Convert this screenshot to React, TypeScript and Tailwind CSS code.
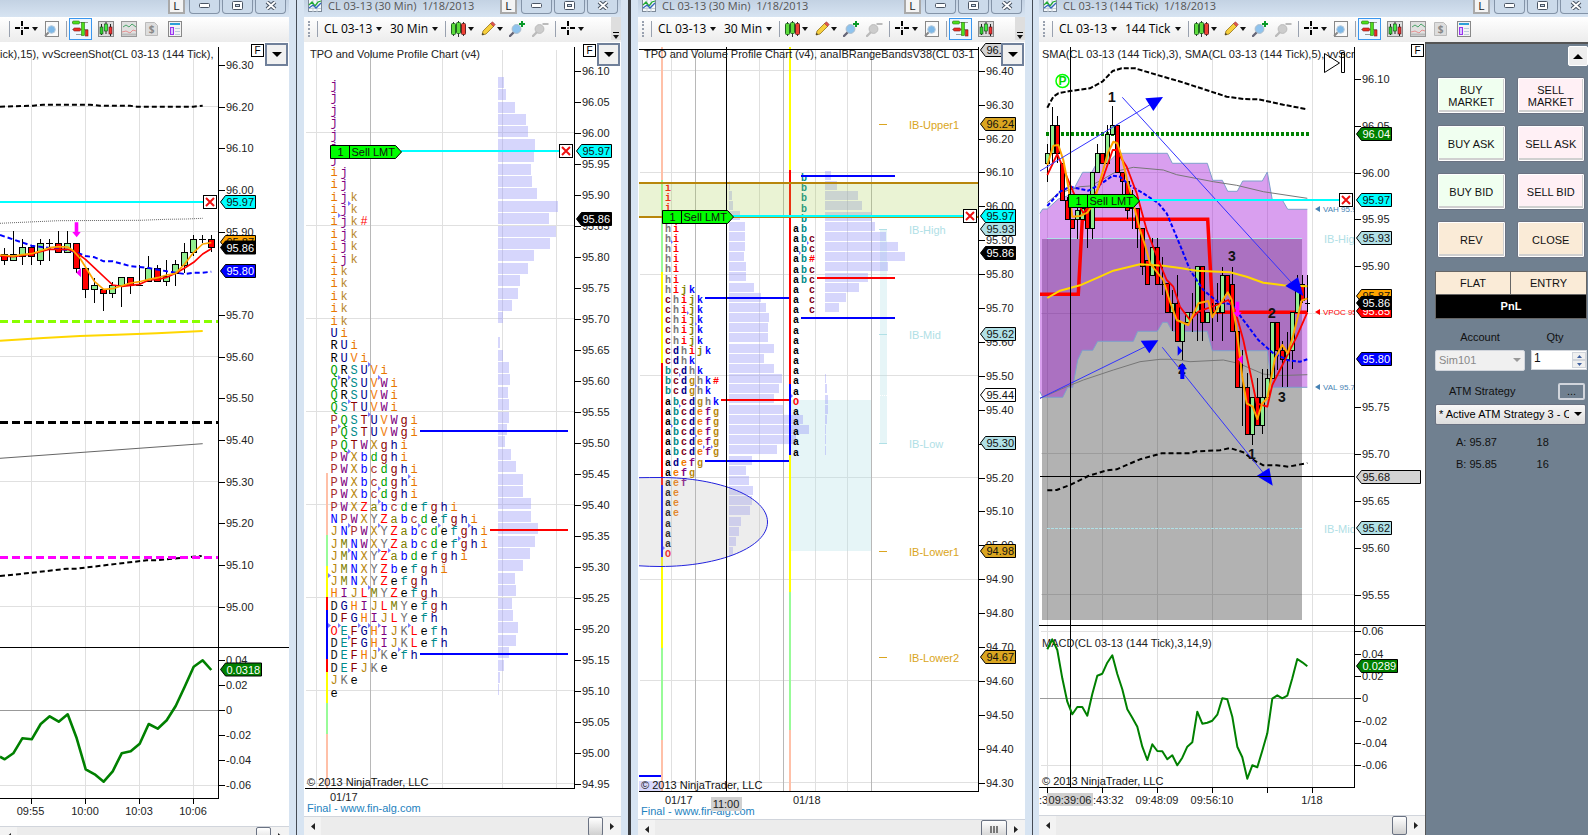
import type { ReactNode } from "react";

const SANS = "font-['Liberation_Sans',Arial,sans-serif]";
const UI = "font-['Open_Sans','Segoe_UI',sans-serif]";

// Series are stored at triple resolution, this brings them back to chart pixels
const trace = (points: string, ox = 0, oy = 0) =>
  points
    .split(" ")
    .map((pair) => {
      const [x, y] = pair.split(",").map(Number);
      return `${(ox + x / 3).toFixed(1)},${(oy + y / 3).toFixed(1)}`;
    })
    .join(" ");

/* ---------- chart primitives ---------- */

type LineProps = {
  points: string;
  ox?: number;
  oy?: number;
  color: string;
  width?: number;
  dash?: string;
};

const Line = ({ points, ox, oy, color, width = 1, dash }: LineProps) => (
  <polyline
    points={trace(points, ox, oy)}
    fill="none"
    stroke={color}
    strokeWidth={width}
    strokeDasharray={dash}
    strokeLinejoin="round"
  />
);

type SegProps = {
  x1: number;
  y1: number;
  x2: number;
  y2: number;
  color: string;
  width?: number;
  dash?: string;
};

const Seg = ({ x1, y1, x2, y2, color, width = 1, dash }: SegProps) => (
  <line
    x1={x1}
    y1={y1}
    x2={x2}
    y2={y2}
    stroke={color}
    strokeWidth={width}
    strokeDasharray={dash}
    shapeRendering="crispEdges"
  />
);

type TagProps = {
  axis: number;
  y: number;
  label: string;
  fill: string;
  color?: string;
  width?: number;
};

const Tag = ({ axis, y, label, fill, color = "#111", width = 37 }: TagProps) => (
  <g>
    <polygon
      points={`${axis + 2},${y} ${axis + 7},${y - 6.5} ${axis + width},${y - 6.5} ${axis + width},${y + 6.5} ${axis + 7},${y + 6.5}`}
      fill={fill}
      stroke="#000"
    />
    <text x={axis + 8} y={y + 4} fill={color}>
      {label}
    </text>
  </g>
);

const Ticks = ({
  axis,
  values,
  toY,
  digits = 2,
}: {
  axis: number;
  values: number[];
  toY: (v: number) => number;
  digits?: number;
}) => (
  <g>
    {values.map((v) => (
      <g key={v}>
        <Seg x1={axis} x2={axis + 6} y1={Math.round(toY(v)) + 0.5} y2={Math.round(toY(v)) + 0.5} color="#000" />
        <text x={axis + 7.5} y={Math.round(toY(v)) + 4} fill="#222">
          {v === 0 ? "0" : v.toFixed(digits)}
        </text>
      </g>
    ))}
  </g>
);

const CancelBox = ({ x, y }: { x: number; y: number }) => (
  <g>
    <rect x={x} y={y} width={13} height={13} fill="#fff" stroke="#000" />
    <path
      d={`M${x + 2.5} ${y + 2.5}l8 8M${x + 10.5} ${y + 2.5}l-8 8`}
      stroke="#e11"
      strokeWidth={2}
    />
  </g>
);

const OrderFlag = ({ x, y, split = 19 }: { x: number; y: number; split?: number }) => (
  <g>
    <polygon
      points={`${x},${y} ${x + 65},${y} ${x + 71},${y + 6.5} ${x + 65},${y + 13} ${x},${y + 13}`}
      fill="#0f0"
      stroke="#000"
    />
    <line x1={x + split} x2={x + split} y1={y} y2={y + 13} stroke="#000" />
    <text x={x + 7} y={y + 10.5} fill="#111">
      1
    </text>
    <text x={x + split + 2} y={y + 10.5} fill="#111">
      Sell LMT
    </text>
  </g>
);

// x, body top, body bottom, high, low, direction (g up, r down, x flat)
type Bar = [number, number, number, number, number, "g" | "r" | "x"];

const Candles = ({ bars, ox, oy, w }: { bars: Bar[]; ox: number; oy: number; w: number }) => (
  <g shapeRendering="crispEdges">
    {bars.map(([x, top, bottom, high, low, dir]) => {
      const cx = Math.floor(ox + x / 3) + 0.5;
      return (
        <g key={x} stroke="#000">
          <line x1={cx} x2={cx} y1={oy + high / 3} y2={oy + low / 3} />
          {dir === "x" ? (
            <line x1={cx - w / 2 - 0.5} x2={cx + w / 2 + 0.5} y1={oy + top / 3} y2={oy + top / 3} />
          ) : (
            <rect
              x={cx - w / 2}
              y={oy + top / 3}
              width={w}
              height={(bottom - top) / 3}
              fill={dir === "g" ? "#90ee90" : "#f00"}
            />
          )}
        </g>
      );
    })}
  </g>
);

const ColorBar = ({ x, stops }: { x: number; stops: [number, string][] }) => (
  <g>
    {stops.slice(0, -1).map(([y, color], i) => (
      <rect key={y} x={x} y={y} width={2} height={stops[i + 1][0] - y} fill={color} shapeRendering="crispEdges" />
    ))}
  </g>
);

type TpoProps = {
  rows: string[];
  x: number;
  y: number;
  pitch: number;
  step: number;
  colors: Record<string, string>;
};

const Tpo = ({ rows, x, y, pitch, step, colors }: TpoProps) => (
  <g textAnchor="middle" className="font-['Liberation_Mono',monospace]">
    {rows.map((row, r) => (
      <text key={r} y={Math.round(y + r * step + 4)}>
        {row.split("").map((letter, i) =>
          letter === " " ? null : (
            <tspan key={i} x={x + i * pitch} fill={colors[letter] ?? "#000"}>
              {letter}
            </tspan>
          ),
        )}
      </text>
    ))}
  </g>
);

const Profile = ({
  widths,
  x,
  y,
  step,
}: {
  widths: number[];
  x: number;
  y: number;
  step: number;
}) => (
  <g fill="#9898f8" fillOpacity={0.4}>
    {widths.map((w, i) => (
      <rect
        key={i}
        x={x}
        y={Math.round(y + i * step - step / 2)}
        width={w}
        height={Math.floor(step) - 1}
        shapeRendering="crispEdges"
      />
    ))}
  </g>
);

const SALMON = "#ffc0a8";
const MINT = "#98fb98";

/* ---------- window chrome ---------- */

const Caret = () => (
  <svg width="6" height="4" viewBox="0 0 6 4" className="shrink-0">
    <path d="M0 0h6L3 4z" fill="#111" />
  </svg>
);

const Separator = () => <div className="h-4 w-px shrink-0 bg-gray-400" />;

const CandlesIcon = () => (
  <svg width="15" height="16" viewBox="0 0 15 16">
    <path d="M2.5 1v14M7.5 0v16M12.5 1v14" stroke="#333" />
    <rect x="0.5" y="2.5" width="4" height="11" rx="1" fill="#5cdb3c" stroke="#262" />
    <rect x="5.5" y="1.5" width="4" height="11" rx="1" fill="#5cdb3c" stroke="#262" />
    <rect x="10.5" y="2.5" width="4" height="11" rx="1" fill="#ee4236" stroke="#622" />
  </svg>
);

const PencilIcon = () => (
  <svg width="15" height="15" viewBox="0 0 15 15">
    <path d="M1 14l1-4 8-8 3 3-8 8z" fill="#f7cf3c" stroke="#94741b" strokeWidth="0.8" />
    <path d="M9.5 2.5L11.5.8l2.7 2.7-1.7 2z" fill="#e2544c" stroke="#8d4040" strokeWidth="0.6" />
    <path d="M1 14l.6-2.2 1.6 1.6z" fill="#333" />
  </svg>
);

const LensIcon = ({ sign }: { sign: "+" | "-" }) => (
  <svg width="17" height="16" viewBox="0 0 17 16">
    <path d="M1 15l4-4" stroke={sign === "+" ? "#667" : "#bbb"} strokeWidth="2.4" strokeLinecap="round" />
    <circle cx="7.5" cy="8" r="4.4" fill={sign === "+" ? "#8ec3ee" : "#ccc"} stroke={sign === "+" ? "#a9bccc" : "#bbb"} />
    {sign === "+" ? (
      <path d="M13 0v6M10 3h6" stroke="#0a9a2a" strokeWidth="2" />
    ) : (
      <path d="M10.5 3h6" stroke="#bbb" strokeWidth="2" />
    )}
  </svg>
);

const CrossIcon = () => (
  <svg width="15" height="15" viewBox="0 0 15 15">
    <path d="M7 0v5M7 9v5M0 7h5M9 7h5" stroke="#000" strokeWidth="2" />
    <path d="M7 6v2M6 7h2" stroke="#000" strokeWidth="0.6" />
  </svg>
);

const PageLensIcon = () => (
  <svg width="15" height="16" viewBox="0 0 15 16">
    <rect x="1.5" y="0.5" width="13" height="15" fill="#fafafa" stroke="#888" />
    <path d="M1 15l4-4" stroke="#888" strokeWidth="2" />
    <circle cx="7.5" cy="8.5" r="3.8" fill="#7db8e8" stroke="#b7cbdc" />
  </svg>
);

const TraderIcon = () => (
  <svg width="17" height="17" viewBox="0 0 17 17">
    <path d="M0 2.5h16M0 9.5h16M4 14.5h8" stroke="#999" />
    <rect x="0.5" y="1" width="7" height="3" rx="1" fill="#4ddf1c" stroke="#287a10" strokeWidth="0.6" />
    <rect x="1.5" y="8" width="7" height="3" rx="1" fill="#ee2b22" stroke="#7c1a16" strokeWidth="0.6" />
    <rect x="9.5" y="2.5" width="3" height="13" fill="#4ddf1c" stroke="#287a10" strokeWidth="0.6" />
    <rect x="13.5" y="10" width="2.5" height="6" fill="#ee2b22" stroke="#7c1a16" strokeWidth="0.6" />
  </svg>
);

const BarsIcon = () => (
  <svg width="16" height="16" viewBox="0 0 16 16">
    <rect x="0.5" y="0.5" width="15" height="15" fill="#ddd" stroke="#888" />
    <path d="M3.5 3v11M8 1v12M12.5 3v12" stroke="#222" />
    <rect x="2" y="6" width="3" height="7" fill="#3c3" stroke="#141" strokeWidth="0.6" />
    <rect x="6.5" y="3" width="3" height="7" fill="#4e4" stroke="#141" strokeWidth="0.6" />
    <rect x="11" y="6" width="3" height="7" fill="#e33" stroke="#411" strokeWidth="0.6" />
  </svg>
);

const IndicatorIcon = () => (
  <svg width="16" height="16" viewBox="0 0 16 16">
    <rect x="0.5" y="0.5" width="15" height="15" fill="#e0e0e0" stroke="#999" />
    <path d="M2 6l3-2 3 2 3-3 4 3" fill="none" stroke="#4ba56a" />
    <path d="M1 11l4-1 4 2 3-3 3 1" fill="none" stroke="#e69090" />
    <path d="M1 13.5h14" stroke="#bbb" strokeWidth="2" />
  </svg>
);

const DollarIcon = () => (
  <svg width="13" height="16" viewBox="0 0 13 16">
    <path d="M.5 1.5h9l3 3v10H.5z" fill="#ddd" stroke="#bbb" />
    <text x="6.5" y="12" textAnchor="middle" fill="#888" className="text-[10px] font-bold">
      $
    </text>
  </svg>
);

const PanelIcon = () => (
  <svg width="14" height="16" viewBox="0 0 14 16">
    <rect x="0.5" y="0.5" width="13" height="15" fill="#f4f4f4" stroke="#888" />
    <rect x="2" y="2" width="10" height="2" fill="#2da0d8" />
    <rect x="2.5" y="6.5" width="3" height="7" fill="#dcc4ff" stroke="#93e" />
    <path d="M7 7.5h5M7 10.5h5M7 13.5h5" stroke="#bcd" />
  </svg>
);

const ChartIcon = () => (
  <svg width="14" height="13" viewBox="0 1 14 13" className="shrink-0">
    <rect x="0.5" y="0.5" width="13" height="12" fill="#f4f8fb" stroke="#7d8a99" />
    <path d="M1 9.5h12M5 1v12M9 1v12" stroke="#c5ced8" />
    <path d="M1 6l3-3 3 4 3-4 3-1" fill="none" stroke="#2a3" strokeWidth="1.3" />
    <path d="M1 9l4-3 3 3 5-5" fill="none" stroke="#36b" strokeWidth="1.3" />
  </svg>
);

const FrameButton = ({ label, children }: { label: string; children: ReactNode }) => (
  <button
    aria-label={label}
    className="flex h-3.5 w-[31px] shrink-0 items-center justify-center rounded-b border border-t-0 border-[#8494a8] bg-[#cbdaea] pb-0.5"
  >
    {children}
  </button>
);

const TitleBar = ({ title, className = "" }: { title?: string; className?: string }) => (
  <div
    className={`flex h-[17px] shrink-0 items-start gap-0.5 bg-linear-to-b from-[#c3d2e3] to-[#d7e4f2] pr-[3px] pl-1 ${className}`}
  >
    {title && (
      <>
        <ChartIcon />
        <span className={`${UI} pl-1 text-[11px] leading-3 whitespace-pre text-[#555]`}>{title}</span>
      </>
    )}
    <div className="grow" />
    <button className="mr-0.5 h-3.5 w-[17px] shrink-0 border-2 border-t-0 border-[#a9a9a9] bg-[#f4f4f4] text-[11px] leading-3 text-[#222]">
      L
    </button>
    <FrameButton label="Minimize">
      <svg width="11" height="5">
        <rect x="0.5" y="0.5" width="10" height="4" rx="1" fill="#fff" stroke="#4a5564" />
      </svg>
    </FrameButton>
    <FrameButton label="Maximize">
      <svg width="11" height="9">
        <rect x="0.5" y="0.5" width="10" height="8" rx="1" fill="#fff" stroke="#4a5564" />
        <rect x="3.5" y="3.5" width="4" height="2" fill="#cbdaea" stroke="#4a5564" />
      </svg>
    </FrameButton>
    <FrameButton label="Close">
      <svg width="12" height="9" viewBox="0 0 12 9">
        <path d="M2 1l8 7M10 1L2 8" stroke="#4a5564" strokeWidth="4" />
        <path d="M2 1l8 7M10 1L2 8" stroke="#fff" strokeWidth="1.8" />
      </svg>
    </FrameButton>
  </div>
);

type ToolbarProps = {
  period?: string;
  page?: boolean;
  views?: number;
  overflow?: boolean;
};

const Toolbar = ({ period, page = true, views = 0, overflow }: ToolbarProps) => {
  const extra = [
    { name: "Chart bars", icon: <BarsIcon /> },
    { name: "Indicators", icon: <IndicatorIcon /> },
    { name: "Account", icon: <DollarIcon /> },
    { name: "Properties", icon: <PanelIcon /> },
  ].slice(0, views);
  return (
    <div
      className={`${UI} flex h-[25px] shrink-0 items-center overflow-hidden bg-linear-to-b from-white to-[#ececec] pb-0.5 text-[12px] text-black ${period ? "pl-1" : "pl-[9px]"}`}
    >
      {period && (
        <>
          <div className="mr-[7px] h-4 w-0.5 shrink-0 border-l-2 border-dotted border-gray-400" />
          <Separator />
          <button className="ml-1.5 flex w-[58px] shrink-0 items-center justify-between whitespace-nowrap">
            CL 03-13 <Caret />
          </button>
          <button
            className={`ml-2 flex shrink-0 items-center justify-between whitespace-nowrap ${period === "30 Min" ? "w-12" : "w-14"}`}
          >
            {period} <Caret />
          </button>
          <div className="w-[7px] shrink-0" />
          <Separator />
          <button aria-label="Chart style" className="ml-[5px] flex w-[30px] shrink-0 items-center gap-0.5">
            <CandlesIcon /> <Caret />
          </button>
          <button aria-label="Drawing tools" className="flex w-7 shrink-0 items-center gap-px">
            <PencilIcon /> <Caret />
          </button>
          <button aria-label="Zoom in" className="w-[23px] shrink-0">
            <LensIcon sign="+" />
          </button>
          <button aria-label="Zoom out" className="w-[23px] shrink-0">
            <LensIcon sign="-" />
          </button>
        </>
      )}
      <Separator />
      <button aria-label="Cross hair" className="ml-[5px] flex w-[29px] shrink-0 items-center gap-0.5">
        <CrossIcon /> <Caret />
      </button>
      {page && (
        <>
          <button aria-label="Data box" className="w-[22px] shrink-0">
            <PageLensIcon />
          </button>
          <Separator />
          <button
            aria-label="Chart trader"
            className="mx-0.5 flex h-[22px] w-[23px] shrink-0 items-center justify-center border border-[#3a96ee] bg-[#eef6ff]"
          >
            <TraderIcon />
          </button>
        </>
      )}
      {extra.map(({ name, icon }) => (
        <button key={name} aria-label={name} className="flex w-[23px] shrink-0 justify-center">
          {icon}
        </button>
      ))}
      {overflow && (
        <button
          aria-label="More tools"
          className="ml-auto flex h-full w-2.5 shrink-0 flex-col items-center justify-end gap-0.5 bg-[#dedede] pb-px"
        >
          <span className="h-px w-1.5 bg-black" />
          <Caret />
        </button>
      )}
    </div>
  );
};

const Scrollbar = ({ thumb = "w-[15px]", grip }: { thumb?: string; grip?: boolean }) => (
  <div className="flex h-5 shrink-0 items-stretch border-t border-gray-300 bg-[#ececec]">
    <button aria-label="Scroll left" className="flex w-[17px] items-center justify-center bg-[#f3f3f3]">
      <svg width="4" height="7">
        <path d="M4 0v7L0 3.5z" fill="#222" />
      </svg>
    </button>
    <div className="grow" />
    <div
      className={`flex items-center justify-center rounded-xs border border-gray-500 bg-linear-to-b from-white to-[#d0d0d0] ${thumb}`}
    >
      {grip && (
        <svg width="8" height="7">
          <path d="M1 0v7M4 0v7M7 0v7" stroke="#555" strokeWidth="1.5" />
        </svg>
      )}
    </div>
    <button aria-label="Scroll right" className="flex w-[18px] items-center justify-center bg-[#f3f3f3]">
      <svg width="4" height="7">
        <path d="M0 0v7l4-3.5z" fill="#222" />
      </svg>
    </button>
  </div>
);

const FixedButton = ({ className }: { className: string }) => (
  <button
    className={`absolute flex size-[13px] items-center justify-center border border-black bg-white text-[10px] leading-none ${className}`}
  >
    F
  </button>
);

const MenuButton = () => (
  <button
    aria-label="Chart trader menu"
    className="absolute top-px right-px flex size-[23px] items-center justify-center border-2 border-[#70809a] bg-[#f1f1f1]"
  >
    <svg width="10" height="5">
      <path d="M0 0h10L5 5z" fill="#000" />
    </svg>
  </button>
);

type PaneProps = { viewBox: string; label: string; children: ReactNode };

const Pane = ({ viewBox, label, children }: PaneProps) => (
  <svg viewBox={viewBox} role="img" aria-label={label} className={`block w-full ${SANS} text-[11px]`}>
    {children}
  </svg>
);

/* ---------- chart 1: 144 tick, zoomed ---------- */

const leftBars: Bar[] = [
  [14, 764, 782, 745, 794, "r"],
  [41, 764, 782, 693, 782, "g"],
  [67, 741, 768, 718, 794, "g"],
  [95, 741, 768, 737, 794, "r"],
  [122, 730, 782, 717, 794, "g"],
  [149, 730, 730, 717, 782, "x"],
  [176, 730, 757, 693, 757, "r"],
  [203, 730, 757, 693, 757, "g"],
  [230, 730, 805, 730, 818, "r"],
  [257, 805, 868, 805, 893, "r"],
  [284, 857, 868, 833, 908, "g"],
  [311, 868, 880, 868, 932, "r"],
  [338, 857, 880, 845, 893, "g"],
  [365, 832, 857, 832, 920, "g"],
  [392, 832, 855, 832, 881, "r"],
  [419, 855, 857, 795, 857, "g"],
  [446, 805, 845, 769, 845, "g"],
  [473, 805, 845, 795, 845, "r"],
  [500, 830, 845, 780, 857, "g"],
  [527, 793, 820, 780, 857, "g"],
  [554, 757, 795, 730, 820, "g"],
  [581, 718, 757, 706, 768, "g"],
  [608, 718, 718, 706, 730, "x"],
  [635, 718, 743, 706, 756, "r"],
];

const TickChartLeft = () => {
  const y = (p: number) => 106.7 + (96.2 - p) * 416.67;
  const m = (v: number) => 710.4 - v * 1250;
  return (
    <Pane viewBox="0 42 289 784" label="CL 03-13 144 tick chart">
      <rect x={0} y={42} width={289} height={784} fill="#fff" />
      {[31.5, 85.5, 139.5, 193.5].map((x) => (
        <Seg key={x} x1={x} x2={x} y1={50} y2={798} color="#e0e0e0" />
      ))}
      {[96.2, 95.9, 95.6, 95.3, 95].map((p) => (
        <Seg key={p} x1={0} x2={218} y1={y(p)} y2={y(p)} color="#e0e0e0" />
      ))}
      <Seg x1={0} x2={218} y1={785.5} y2={785.5} color="#e0e0e0" />
      <Seg x1={0} x2={218} y1={710.5} y2={710.5} color="#999" />
      <text x={0} y={58} fill="#222">
        ick),15), vvScreenShot(CL 03-13 (144 Tick),
      </text>

      <Line points="0,320 100,317 130,314 270,314 300,317 390,317 410,320 580,320 608,317" color="#000" width={2} dash="5 3" />
      <Seg x1={0} x2={203} y1={202} y2={202} color="#0ff" width={2} />
      <Line points="0,670 40,668 176,662 420,661 500,658 560,657 608,655" color="#666" dash="1 1" />
      <Seg x1={0} x2={218} y1={321.5} y2={321.5} color="#8f0" width={3} dash="8 4" />
      <Line points="0,1022 130,1014 240,1008 350,1004 470,1000 608,993" color="#ffd700" width={2} />
      <Seg x1={0} x2={218} y1={422.5} y2={422.5} color="#000" width={3} dash="8 4" />
      <Line points="0,115 608,71" oy={420} color="#666" />
      <Line
        points="0,468 90,459 200,446 230,446 320,435 440,421 470,421 520,416 605,408"
        oy={420}
        color="#000"
        width={2}
        dash="5 3"
      />
      <Seg x1={0} x2={218} y1={557.5} y2={557.5} color="#f0f" width={3} dash="8 4" />

      <Candles bars={leftBars} ox={0} oy={0} w={6} />
      <Line
        points="0,705 95,737 149,744 203,750 230,758 257,768 284,772 311,784 338,784 365,791 392,799 446,804 500,814 554,822 581,818 608,818 634,815"
        color="#00f"
        width={2}
        dash="5 3"
      />
      <Line
        points="0,768 40,770 67,766 95,762 149,748 203,748 230,758 257,779 338,855 365,859 419,853 446,840 473,838 500,832 527,820 554,804 581,787 608,762 634,746"
        color="#f00"
        width={1.7}
      />
      <Line
        points="0,765 40,768 67,764 95,761 122,752 149,743 176,740 203,741 220,752 240,775 284,845 311,868 338,866 365,857 392,849 419,845 446,838 473,833 500,825 527,820 554,792 581,757 608,732 634,728"
        color="#ffa500"
        width={1.7}
      />
      <polygon points={trace("224,667 235,667 235,696 242,696 230,712 217,696 224,696")} fill="#f0f" />
      <polygon points={trace("229,818 243,804 243,832")} fill="#f0f" />
      <CancelBox x={203.5} y={195.5} />

      <Line
        points="0,1010 14,1018 40,1000 67,955 95,958 122,912 149,889 176,905 203,883 230,955 257,1048 284,1063 311,1085 338,1054 365,1000 392,994 419,971 446,912 473,926 500,901 527,858 554,800 581,740 608,721 634,750"
        oy={420}
        color="#008000"
        width={2.6}
      />

      <Seg x1={218.5} x2={218.5} y1={47} y2={798} color="#000" />
      <Seg x1={0} x2={289} y1={647.5} y2={647.5} color="#000" />
      <Seg x1={0} x2={219} y1={798.5} y2={798.5} color="#000" />
      <Ticks axis={218.5} toY={y} values={[96.3, 96.2, 96.1, 96, 95.9, 95.7, 95.6, 95.5, 95.4, 95.3, 95.2, 95.1, 95]} />
      <Ticks axis={218.5} toY={m} values={[0.04, 0.02, 0, -0.02, -0.04, -0.06]} />
      <Tag axis={218.5} y={202} label="95.97" fill="#0ff" />
      <Tag axis={218.5} y={242} label="95.87" fill="#ffa500" />
      <Tag axis={218.5} y={247.5} label="95.86" fill="#000" color="#fff" />
      <Tag axis={218.5} y={271} label="95.80" fill="#00f" color="#fff" />
      <Tag axis={218.5} y={669.5} label="0.0318" fill="#008000" color="#fff" width={43} />
      {[
        [30.5, "09:55"],
        [85, "10:00"],
        [139, "10:03"],
        [193, "10:06"],
      ].map(([x, label]) => (
        <g key={label}>
          <Seg x1={Number(x) + 0.5} x2={Number(x) + 0.5} y1={799} y2={804} color="#000" />
          <text x={x} y={815} textAnchor="middle" fill="#222">
            {label}
          </text>
        </g>
      ))}
    </Pane>
  );
};

/* ---------- chart 2: market profile ---------- */

const profileColors: Record<string, string> = {
  j: "#800080", i: "#e87800", k: "#b8862b", "#": "#f00",
  U: "#00008b", R: "#000", V: "#f08010", Q: "#00a000", S: "#008b8b",
  T: "#8b0000", W: "#800080", g: "#8b0000", P: "#a52a2a", X: "#b8860b",
  h: "#00008b", b: "#00f", c: "#a52a2a", d: "#00a000", Z: "#f00",
  a: "#808000", e: "#000", f: "#008b8b", N: "#00f", Y: "#707070",
  J: "#b8860b", M: "#808000", H: "#f07800", I: "#800080", L: "#f00",
  D: "#222", F: "#8b0000", G: "#00008b", E: "#008b8b", K: "#707070", O: "#f00",
};

const profileRows = [
  "j", "j", "j", "j", "j", "j", "j", "ij", "ij", "ijk", "ijk", "ijk#", "ijk",
  "ijk", "ijk", "ik", "ik", "ik", "ik", "ik", "Ui", "RUi", "RUVi", "QRSUVi",
  "QRSUVWi", "QRSUVWi", "QSTUVWi", "PQSTUVWgi", "PQSTUVWgi", "PQTWXghi",
  "PWXbdghi", "PWXbcdghi", "PWXbcdghi", "PWXbcdghi", "PWXZabcdefghi",
  "NPWXYZabcdefghi", "JNPWXYZabcdefghi", "JMNWXYZabcdefghi",
  "JMNXYZabdefghi", "JMNXYZbefghi", "JMNXYZefgh", "HIJLMYZefgh",
  "DGHIJLMYefgh", "DFGHIJLYefh", "OEFGHIJKLefh", "DEFGHIJKLefh",
  "DEFHJKefh", "DEFJKe", "JKe", "e",
];

const profileVolume = [
  6, 8, 17, 28, 30, 37, 36, 33, 34, 39, 60, 51, 58, 52, 36, 30, 22, 20, 14, 5,
  0, 2, 5, 11, 12, 10, 11, 11, 9, 7, 13, 18, 25, 25, 33, 33, 40, 37, 32, 25,
  17, 18, 14, 15, 20, 18, 11, 6, 2, 1,
];

// [column, row] of the split marks between letters
const profileMarks = [
  [2, 11], [1, 12], [4, 24], [1, 25], [2, 25], [5, 25], [2, 27], [4, 28],
  [1, 29], [2, 31], [8, 33], [5, 34], [5, 35], [2, 37], [5, 37], [9, 37],
  [11, 37], [14, 37], [13, 38], [2, 39], [5, 39], [6, 39], [0, 41], [4, 42],
  [0, 45], [1, 45], [3, 45], [4, 45], [5, 45], [8, 45], [2, 46], [5, 47],
  [7, 47],
];

const ProfileChart = () => {
  const y = (p: number) => 132.7 + (96 - p) * 620;
  return (
    <Pane viewBox="304 42 317 774" label="CL 03-13 30 minute TPO and volume profile">
      <rect x={304} y={42} width={317} height={774} fill="#fff" />
      {[316.5, 442.5, 502.5, 556.5].map((x) => (
        <Seg key={x} x1={x} x2={x} y1={50} y2={788} color="#e0e0e0" />
      ))}
      {[96, 95.85, 95.7, 95.55, 95.4, 95.25, 95.1, 94.95].map((p) => (
        <Seg key={p} x1={306} x2={574} y1={y(p)} y2={y(p)} color="#e0e0e0" />
      ))}
      <Seg x1={370.5} x2={370.5} y1={50} y2={788} color="#b8b8b8" />
      <Profile widths={profileVolume} x={498} y={83} step={12.4} />
      <ColorBar
        x={326}
        stops={[
          [473, SALMON], [535, MINT], [566, "#ff0"], [597, "#f00"], [610, "#00f"], [659, "#f00"],
          [672, "#ff0"], [703, MINT], [734, SALMON], [788, ""],
        ]}
      />
      <g className="text-[12px]">
        <Tpo rows={profileRows} x={334} y={85} pitch={10} step={12.4} colors={profileColors} />
      </g>
      {profileMarks.map(([c, r]) => (
        <path key={`${c}-${r}`} d={`M${328 + c * 10} ${Math.round(64.5 + r * 12.4)}v5l3-2.5z`} fill="#7777ff" />
      ))}
      <Seg x1={420} x2={568} y1={431} y2={431} color="#00f" width={2} />
      <Seg x1={490} x2={568} y1={530} y2={530} color="#f00" width={2} />
      <Seg x1={420} x2={568} y1={654} y2={654} color="#00f" width={2} />
      <Seg x1={401} x2={559} y1={151} y2={151} color="#0ff" width={2} />
      <OrderFlag x={330.5} y={145.5} />
      <CancelBox x={559.5} y={144.5} />
      <text x={310} y={58} fill="#222">
        TPO and Volume Profile Chart (v4)
      </text>
      <Seg x1={574.5} x2={574.5} y1={47} y2={788} color="#000" />
      <Seg x1={305} x2={575} y1={788.5} y2={788.5} color="#000" />
      <Ticks
        axis={574.5}
        toY={y}
        values={Array.from({ length: 24 }, (_, i) => 96.1 - i * 0.05)}
      />
      <Tag axis={574.5} y={151} label="95.97" fill="#0ff" />
      <Tag axis={574.5} y={219} label="95.86" fill="#000" color="#fff" />
      <text x={307} y={786} fill="#111">
        © 2013 NinjaTrader, LLC
      </text>
      <text x={330} y={801} fill="#222">
        01/17
      </text>
      <text x={307} y={812} fill="#1e82c0">
        Final - www.fin-alg.com
      </text>
    </Pane>
  );
};

/* ---------- chart 3: two day profile with initial balance bands ---------- */

const balanceColors: Record<string, string> = {
  i: "#f00", h: "#777", j: "#808000", k: "#00f", c: "#800020", d: "#00008b",
  b: "#008b8b", a: "#000", g: "#b8860b", e: "#f07800", f: "#800080",
  "#": "#f00", O: "#f00",
};

const balanceRows = [
  "i", "i", "i", "", "hi", "hi", "hi", "hi", "hi", "hi", "hijk", "chijk",
  "chijk", "chijk", "chijk", "chijk", "cdhijk", "cdhk", "bcdhk", "bcdghk#",
  "bcdghk", "abcdghk", "abcdefg", "abcdefg", "abcdefg", "abcdefg", "abcdefg",
  "adefg", "aefg", "aef", "ae", "ae", "ae", "a", "a", "a", "O",
];

const todayRows = [
  " b", " b", " b", " b", " b", "ab", "abc", "abc", "ab#", "abc", "abc",
  "a c", "a c", "a c", "a", "a", "a", "a", "a", "a", "a", "a", "O", "a", "a",
  "a", "a", "a",
];

const balanceVolume = [
  1, 3, 4, 11, 16, 16, 16, 15, 17, 17, 25, 32, 37, 40, 39, 39, 45, 35, 45, 53,
  50, 45, 54, 74, 80, 67, 48, 23, 17, 20, 24, 23, 21, 12, 10, 7, 4,
];

const todayVolume = [
  6, 12, 33, 37, 47, 50, 61, 73, 80, 63, 43, 34, 21, 14, 0, 0, 0, 0, 0, 0, 1,
  2, 3, 3, 2, 1, 1, 1,
];

const BalanceChart = () => {
  const y = (p: number) => 70.7 + (96.4 - p) * 339;
  const gold = "#daa520";
  const pale = "#b0e0e6";
  return (
    <Pane viewBox="638 42 387 777" label="CL 03-13 30 minute initial balance chart">
      <rect x={638} y={42} width={387} height={777} fill="#fff" />
      {[671.5, 759.5, 815.5, 847.5].map((x) => (
        <Seg key={x} x1={x} x2={x} y1={50} y2={791} color="#e0e0e0" />
      ))}
      {[96.4, 96.1, 95.8, 95.5, 95.2, 94.9, 94.6, 94.3].map((p) => (
        <Seg key={p} x1={640} x2={978} y1={y(p)} y2={y(p)} color="#e0e0e0" />
      ))}
      {[695.5, 783.5, 871.5].map((x) => (
        <Seg key={x} x1={x} x2={x} y1={50} y2={791} color="#b8b8b8" />
      ))}
      <rect x={791} y={400} width={80} height={151} fill={pale} fillOpacity={0.32} />
      <rect x={880} y={229} width={7} height={214} fill={pale} fillOpacity={0.32} />
      <Profile widths={balanceVolume} x={729} y={186} step={10.17} />
      <Profile widths={todayVolume} x={825} y={176} step={10.17} />
      <rect x={639} y={781} width={22} height={10} fill="#d8d8fc" />
      <g className="text-[10px]" fontWeight={700}>
        <Tpo rows={balanceRows} x={668} y={187} pitch={8} step={10.17} colors={balanceColors} />
        <Tpo rows={todayRows} x={796} y={177} pitch={8} step={10.17} colors={balanceColors} />
      </g>
      {[
        [671, 240], [687, 311], [695, 322], [679, 373], [695, 384], [679, 404], [671, 424],
        [695, 434], [703, 445], [711, 445], [663, 546], [791, 394], [799, 251], [807, 241],
      ].map(([mx, my]) => (
        <path key={`${mx}-${my}`} d={`M${mx} ${my}v4l2-2z`} fill="#7777ff" />
      ))}
      <ColorBar
        x={661}
        stops={[
          [47, SALMON], [180, MINT], [272, "#ff0"], [363, "#f00"], [485, "#00f"], [557, "#ff0"],
          [648, MINT], [740, SALMON], [791, ""],
        ]}
      />
      <ColorBar
        x={789}
        stops={[
          [47, "#ff0"], [170, "#f00"], [384, "#00f"], [455, "#ff0"], [592, MINT], [730, SALMON], [791, ""],
        ]}
      />
      <rect x={639} y={183} width={339} height={34} fill="#a8cc4c" fillOpacity={0.24} />
      <Seg x1={639} x2={978} y1={183} y2={183} color="#b8860b" width={2} />
      <Seg x1={639} x2={978} y1={217} y2={217} color="#b8860b" width={2} />
      <path
        d="M639 477.7Q650 477.5 660 477.5C720 477.5 767.5 497 767.5 522C767.5 547 720 566.5 660 566.5Q650 566.5 639 565.8"
        fill="#bbb"
        fillOpacity={0.26}
        stroke="#22d"
      />
      <Seg x1={705} x2={789} y1={298} y2={298} color="#00f" width={2} />
      <Seg x1={721} x2={789} y1={400} y2={400} color="#f00" width={2} />
      <Seg x1={705} x2={789} y1={461} y2={461} color="#00f" width={2} />
      <Seg x1={801} x2={895} y1={176} y2={176} color="#00f" width={2} />
      <Seg x1={817} x2={895} y1={278} y2={278} color="#f00" width={2} />
      <Seg x1={801} x2={895} y1={318} y2={318} color="#00f" width={2} />
      <Seg x1={639} x2={661} y1={776} y2={776} color="#00f" width={2} />

      {(
        [
          ["IB-Upper1", 124.5, gold],
          ["IB-High", 229.5, pale],
          ["IB-Mid", 334.5, pale],
          ["IB-Low", 443.5, pale],
          ["IB-Lower1", 551.5, gold],
          ["IB-Lower2", 657.5, gold],
        ] as const
      ).map(([label, ly, color]) => (
        <g key={label}>
          <Seg x1={879} x2={887} y1={ly} y2={ly} color={color} />
          <text x={909} y={ly + 4.5} fill={color}>
            {label}
          </text>
        </g>
      ))}
      <Seg x1={880} x2={887} y1={395.5} y2={395.5} color="#fff" dash="1 1" />

      <Seg x1={639} x2={978} y1={49.5} y2={49.5} color="#000" />
      <Seg x1={726.5} x2={726.5} y1={47} y2={791} color="#000" />
      <Seg x1={733} x2={963} y1={216} y2={216} color="#0ff" width={2} />
      <OrderFlag x={662.5} y={210.5} />
      <CancelBox x={963.5} y={209.5} />
      <text x={644} y={58} fill="#222">
        TPO and Volume Profile Chart (v4), anaIBRangeBandsV38(CL 03-1
      </text>
      <rect x={979} y={42} width={46} height={755} fill="#fff" />
      <Seg x1={978.5} x2={978.5} y1={47} y2={791} color="#000" />
      <Seg x1={639} x2={979} y1={791.5} y2={791.5} color="#000" />
      <Ticks axis={978.5} toY={y} values={Array.from({ length: 22 }, (_, i) => 96.4 - i * 0.1)} />
      <Tag axis={978.5} y={50} label="96.47" fill="#d3d3d3" />
      <Tag axis={978.5} y={124} label="96.24" fill={gold} />
      <Tag axis={978.5} y={229} label="95.93" fill={pale} />
      <Tag axis={978.5} y={216} label="95.97" fill="#0ff" />
      <Tag axis={978.5} y={253} label="95.86" fill="#000" color="#fff" />
      <Tag axis={978.5} y={334} label="95.62" fill={pale} />
      <Tag axis={978.5} y={395} label="95.44" fill="#fff" />
      <Tag axis={978.5} y={443} label="95.30" fill={pale} />
      <Tag axis={978.5} y={551} label="94.98" fill={gold} />
      <Tag axis={978.5} y={657} label="94.67" fill={gold} />
      <text x={641} y={789} fill="#111">
        © 2013 NinjaTrader, LLC
      </text>
      <text x={665} y={804} fill="#222">
        01/17
      </text>
      <text x={793} y={804} fill="#222">
        01/18
      </text>
      <text x={641} y={815} fill="#1e82c0">
        Final - www.fin-alg.com
      </text>
      <rect x={711} y={797} width={31} height={14} fill="#d0d0d0" />
      <text x={726} y={808} textAnchor="middle" fill="#222">
        11:00
      </text>
    </Pane>
  );
};

/* ---------- chart 4: 144 tick with order entry ---------- */

const tickBars: Bar[] = [
  [52, 460, 490, 432, 545, "g"],
  [67, 376, 460, 320, 490, "g"],
  [82, 376, 460, 348, 490, "r"],
  [97, 490, 600, 490, 600, "r"],
  [112, 600, 658, 590, 658, "r"],
  [127, 658, 686, 658, 686, "r"],
  [142, 630, 658, 610, 718, "g"],
  [157, 625, 658, 610, 658, "g"],
  [172, 600, 686, 600, 743, "r"],
  [187, 517, 686, 517, 718, "g"],
  [202, 460, 517, 432, 517, "g"],
  [217, 460, 490, 460, 490, "r"],
  [232, 403, 490, 375, 490, "g"],
  [247, 376, 403, 318, 403, "g"],
  [262, 376, 517, 376, 517, "r"],
  [277, 517, 545, 517, 600, "r"],
  [292, 545, 630, 545, 658, "r"],
  [307, 600, 625, 570, 686, "g"],
  [322, 625, 686, 625, 743, "r"],
  [337, 686, 800, 686, 826, "r"],
  [352, 780, 853, 780, 853, "r"],
  [367, 742, 826, 714, 826, "g"],
  [382, 742, 853, 714, 853, "r"],
  [397, 853, 853, 770, 884, "x"],
  [412, 850, 937, 850, 937, "r"],
  [427, 910, 937, 870, 994, "g"],
  [442, 910, 1024, 826, 1024, "r"],
  [457, 967, 1024, 967, 1080, "g"],
  [472, 937, 967, 937, 967, "g"],
  [487, 937, 937, 880, 996, "x"],
  [502, 800, 937, 800, 1024, "g"],
  [517, 800, 967, 800, 1024, "r"],
  [532, 937, 967, 937, 967, "g"],
  [547, 937, 937, 910, 1024, "x"],
  [562, 910, 937, 850, 967, "g"],
  [577, 826, 937, 800, 1024, "g"],
  [592, 826, 880, 826, 880, "r"],
  [607, 853, 994, 800, 994, "r"],
  [622, 994, 1162, 994, 1162, "r"],
  [637, 1162, 1162, 1050, 1277, "x"],
  [652, 1162, 1303, 1120, 1303, "r"],
  [667, 1192, 1303, 1192, 1334, "g"],
  [682, 1192, 1277, 1135, 1277, "r"],
  [697, 1192, 1277, 1108, 1303, "g"],
  [712, 1135, 1192, 1108, 1192, "g"],
  [727, 967, 1135, 967, 1135, "g"],
  [742, 967, 1052, 967, 1110, "r"],
  [757, 1052, 1078, 1023, 1162, "r"],
  [772, 1052, 1078, 995, 1162, "g"],
  [787, 937, 1052, 937, 1108, "g"],
  [802, 853, 937, 825, 937, "g"],
  [817, 853, 900, 825, 910, "r"],
  [832, 910, 910, 825, 937, "x"],
];

const valueArea =
  "30,640 38,627 52,627 85,597 112,588 130,570 158,517 185,517 200,490 232,490 262,460 412,460 427,490 532,490 548,541 577,541 593,574 622,574 638,543 697,543 712,516 727,600 757,600 773,628 832,628";
const valueFloor =
  "832,1162 727,1162 712,1052 547,1052 532,994 427,994 412,967 398,967 382,994 323,994 310,1024 203,1024 188,1051 157,1051 143,1080 128,1162 113,1162 98,1192 38,1192 30,1175";

const TickChart = () => {
  const y = (p: number) => 78.7 + (96.1 - p) * 938.2;
  const m = (v: number) => 698.4 - v * 1117;
  const pale = "#b0e0e6";
  return (
    <Pane viewBox="1039 42 386 773" label="CL 03-13 144 tick chart with order entry">
      <rect x={1039} y={42} width={386} height={773} fill="#fff" />
      {[1047.5, 1102.5, 1157.5, 1212.5, 1267.5, 1312.5].map((x) => (
        <g key={x}>
          <Seg x1={x} x2={x} y1={50} y2={787} color="#e0e0e0" />
          <Seg x1={x} x2={x} y1={787} y2={793} color="#000" />
        </g>
      ))}
      {[y(96), y(95.85), y(95.7), y(95.55), 631.5, 765.5].map((gy) => (
        <Seg key={gy} x1={1041} x2={1354} y1={gy} y2={gy} color="#e0e0e0" />
      ))}
      <Seg x1={1040} x2={1354} y1={698.5} y2={698.5} color="#999" />
      <rect x={1042} y={239} width={260} height={381} fill="#000" fillOpacity={0.3} />
      <polygon points={trace(`${valueArea} ${valueFloor}`, 1030)} fill="rgb(160,15,215)" fillOpacity={0.4} />
      <Line points={valueArea} ox={1030} color="#7f9fcc" />
      <Line points={valueFloor} ox={1030} color="#7f9fcc" />
      <Seg x1={1047} x2={1302} y1={238.5} y2={238.5} color={pale} />
      <Seg x1={1047} x2={1302} y1={528.5} y2={528.5} color={pale} dash="3 1" />
      <text x={1042} y={58} fill="#222">
        SMA(CL 03-13 (144 Tick),3), SMA(CL 03-13 (144 Tick),5), vvScr
      </text>

      <Seg x1={1046} x2={1310} y1={134} y2={134} color="#008000" width={4} dash="3 2" />
      <Line
        points="52,608 85,580 150,560 180,558 215,540 262,513 310,502 400,510 440,524 550,545 620,556 700,575 832,595"
        ox={1030}
        color="#777"
      />
      <Line
        points="30,385 110,350 160,330 250,300 330,275 390,268 430,268 480,275 580,270 625,280 660,295 700,312 740,317 832,314"
        ox={1030}
        oy={270}
        color="#777"
      />
      <polyline
        points={trace("30,883 145,883 157,658 533,658 548,937 832,937", 1030)}
        fill="none"
        stroke="#f00"
        strokeWidth={3.5}
      />
      <Candles bars={tickBars} ox={1030} oy={0} w={4} />
      <Line
        points="52,323 70,290 85,280 120,273 180,265 217,245 248,213 275,205 315,205 382,225 445,243 520,267 590,290 640,297 685,298 760,314 832,328"
        ox={1030}
        color="#000"
        width={2}
        dash="5 2"
      />
      <Line
        points="52,661 80,660 120,645 175,618 230,601 260,598 330,568 395,550 480,550 500,544 570,541 600,534 640,547 670,570 700,586 740,586 775,590 832,579"
        ox={1030}
        oy={270}
        color="#000"
        width={2}
        dash="5 3"
      />
      <Line
        points="52,618 90,575 120,560 175,572 215,550 248,527 270,530 300,557 340,580 385,610 410,640 450,735 480,810 520,870 565,907 605,913 640,960 685,1020 730,1060 775,1081 810,1085 832,1078"
        ox={1030}
        color="#00f"
        width={2}
        dash="4 2"
      />
      <Line
        points="52,894 90,872 150,856 205,832 250,812 330,793 400,797 450,804 500,812 600,817 650,830 700,848 760,856 832,859"
        ox={1030}
        color="#ffd700"
        width={2}
      />
      <Line
        points="52,525 82,462 100,505 127,570 160,640 185,605 217,540 248,450 258,450 290,500 320,580 350,690 385,780 410,840 430,860 450,920 480,960 505,935 560,915 595,900 615,930 640,1020 680,1210 712,1220 727,1155 770,1070 800,1010 832,937"
        ox={1030}
        color="#f00"
        width={1.8}
      />
      <Line
        points="52,495 70,437 85,435 100,480 115,560 127,650 150,648 172,638 190,612 217,520 233,460 250,425 262,430 275,470 290,535 310,610 330,690 345,735 360,790 400,840 420,905 440,960 475,975 505,910 535,903 547,952 575,905 593,877 605,900 620,990 637,1130 650,1210 668,1220 682,1257 697,1210 712,1195 735,1075 757,1035 773,1060 790,1005 815,902 832,895"
        ox={1030}
        color="#ffa500"
        width={2}
      />

      <Line points="30,513 370,308" ox={1030} color="#33f" />
      <Line points="277,292 800,865" ox={1030} color="#33f" />
      <Line points="30,1195 350,1038" ox={1030} color="#33f" />
      <Line points="397,1042 705,1425" ox={1030} color="#33f" />
      <g fill="#00f">
        <polygon points={trace("399,291 346,295 370,333", 1030)} />
        <polygon points={trace("820,888 766,858 804,832", 1030)} />
        <polygon points={trace("385,1021 332,1022 358,1060", 1030)} />
        <polygon points={trace("728,1457 680,1428 718,1404", 1030)} />
        <polygon points={trace("443,1037 443,1067 457,1052", 1030)} />
      </g>
      <g fill="#f0f">
        <polygon points={trace("617,905 628,905 628,937 635,937 622,952 610,937 617,937", 1030)} />
        <polygon points={trace("623,1078 638,1065 638,1093", 1030)} />
      </g>
      <g textAnchor="middle" fontWeight={700} fill="#111" className="text-[14px]">
        <text x={1112} y={102}>1</text>
        <text x={1232} y={261}>3</text>
        <text x={1272} y={318}>2</text>
        <text x={1282} y={402}>3</text>
        <text x={1252} y={459}>1</text>
        <text x={1182} y={374}>2</text>
      </g>
      <polygon points={trace("457,1088 471,1108 463,1108 463,1137 451,1137 451,1108 443,1108", 1030)} fill="#00f" />
      <circle cx={1062.5} cy={81} r={6.5} fill="none" stroke="#0f0" strokeWidth={1.5} />
      <text x={1062.5} y={85} textAnchor="middle" fill="#0d0" fontWeight={700} className="text-[12px]">
        P
      </text>
      <Seg x1={1070.5} x2={1070.5} y1={47} y2={787} color="#000" />
      <Seg x1={1040} x2={1354} y1={476.5} y2={476.5} color="#000" />
      <Seg x1={1139} x2={1339} y1={200} y2={200} color="#0ff" width={2} />
      <OrderFlag x={1068.5} y={194.5} />
      <CancelBox x={1339.5} y={193.5} />
      <g className="text-[8px]">
        <path d="M1315 209l5-3v6z" fill="#4682b4" />
        <text x={1323} y={212} fill="#4682b4">VAH 95.96</text>
        <path d="M1315 312l5-3v6z" fill="#f00" />
        <text x={1323} y={315} fill="#f00">VPOC 95.85</text>
        <path d="M1315 387l5-3v6z" fill="#4682b4" />
        <text x={1323} y={390} fill="#4682b4">VAL 95.77</text>
      </g>
      <text x={1324} y={243} fill={pale}>
        IB-High
      </text>
      <text x={1324} y={533} fill={pale}>
        IB-Mid
      </text>
      <rect x={1355} y={42} width={70} height={736} fill="#fff" />
      <path d="M1324.5 53.5v19l15-9.5zM1341.5 52.5h3v20h-3z" fill="none" stroke="#000" />

      <text x={1042} y={647} fill="#222">
        MACD(CL 03-13 (144 Tick),3,14,9)
      </text>
      <Line
        points="52,298 67,268 82,300 97,385 112,455 127,493 142,471 157,471 172,497 187,432 202,377 217,371 232,338 247,316 262,372 277,418 292,478 307,503 322,530 337,590 352,630 367,583 382,603 397,604 412,628 427,616 442,646 457,623 472,590 487,577 502,485 517,521 532,518 547,512 562,494 577,445 592,448 607,500 622,590 637,622 652,686 667,646 682,652 697,602 712,550 727,446 742,436 757,445 772,437 787,385 802,327 817,337 832,349"
        ox={1030}
        oy={550}
        color="#008000"
        width={2}
      />
      <Seg x1={1354.5} x2={1354.5} y1={47} y2={787} color="#000" />
      <Seg x1={1039} x2={1425} y1={625.5} y2={625.5} color="#000" />
      <Seg x1={1039} x2={1355} y1={787.5} y2={787.5} color="#000" />
      <Ticks axis={1354.5} toY={y} values={Array.from({ length: 12 }, (_, i) => 96.1 - i * 0.05).filter((_, i) => i !== 5 && i !== 6)} />
      <Ticks axis={1354.5} toY={m} values={[0.06, 0.04, 0.02, 0, -0.02, -0.04, -0.06]} />
      <Tag axis={1354.5} y={134} label="96.04" fill="#008000" color="#fff" />
      <Tag axis={1354.5} y={200} label="95.97" fill="#0ff" />
      <Tag axis={1354.5} y={238} label="95.93" fill={pale} />
      <Tag axis={1354.5} y={296} label="95.87" fill="#ffa500" />
      <Tag axis={1354.5} y={311} label="95.85" fill="#f00" color="#fff" />
      <Tag axis={1354.5} y={303} label="95.86" fill="#000" color="#fff" />
      <Tag axis={1354.5} y={359} label="95.80" fill="#00f" color="#fff" />
      <Tag axis={1354.5} y={477} label="95.68" fill="#d3d3d3" width={66} />
      <Tag axis={1354.5} y={528} label="95.62" fill={pale} />
      <Tag axis={1354.5} y={666} label="0.0289" fill="#008000" color="#fff" width={43} />
      <text x={1042} y={785} fill="#111">
        © 2013 NinjaTrader, LLC
      </text>
      <text x={1039} y={804} fill="#222">
        :3
      </text>
      <rect x={1047} y={793} width={46} height={13} fill="#d0d0d0" />
      <text x={1070} y={804} textAnchor="middle" fill="#222">
        09:39:06
      </text>
      <text x={1093} y={804} fill="#222">
        :43:32
      </text>
      <text x={1157} y={804} textAnchor="middle" fill="#222">
        09:48:09
      </text>
      <text x={1212} y={804} textAnchor="middle" fill="#222">
        09:56:10
      </text>
      <text x={1312} y={804} textAnchor="middle" fill="#222">
        1/18
      </text>
    </Pane>
  );
};

/* ---------- order entry ---------- */

const orderButtons = [
  { label: "BUY MARKET", tone: "bg-[#f0fff0]" },
  { label: "SELL MARKET", tone: "bg-[#fff0f5]" },
  { label: "BUY ASK", tone: "bg-[#f0fff0]" },
  { label: "SELL ASK", tone: "bg-[#fff0f5]" },
  { label: "BUY BID", tone: "bg-[#f0fff0]" },
  { label: "SELL BID", tone: "bg-[#fff0f5]" },
  { label: "REV", tone: "bg-[#faebd7]" },
  { label: "CLOSE", tone: "bg-[#faebd7]" },
];

const OrderPanel = () => (
  <div
    className={`${SANS} relative min-w-0 overflow-hidden border-t-2 border-l border-[#555] bg-[#708090] pt-[33px] pl-[9px] text-[11px] text-[#111]`}
  >
    <button
      aria-label="Collapse"
      className="absolute top-0.5 right-0 flex h-5 w-5 items-center justify-center rounded-xs border border-white bg-[#eee]"
    >
      <svg width="10" height="5">
        <path d="M0 5h10L5 0z" fill="#000" />
      </svg>
    </button>
    <div className="grid grid-cols-2 gap-[11px] pr-[3px] pl-0.5">
      {orderButtons.map(({ label, tone }) => (
        <button
          key={label}
          className={`flex h-[37px] items-center justify-center rounded-xs border border-gray-500 px-1 leading-3 shadow-[inset_0_0_0_1px_#fff,inset_-1px_-2px_0_1px_#d0d0d0] ${tone}`}
        >
          {label}
        </button>
      ))}
    </div>
    <div className="mt-[13px] mr-px border border-[#666]">
      <div className="grid grid-cols-2 bg-[#faebd7] text-center leading-[22px]">
        <div className="border-r border-[#666]">FLAT</div>
        <div>ENTRY</div>
      </div>
      <div className="border-t border-[#666] bg-black text-center font-bold leading-[23px] text-white">PnL</div>
    </div>
    <div className="mt-2.5 mr-px grid grid-cols-[90fr_56fr] gap-x-1.5">
      <label htmlFor="account" className="text-center leading-4">
        Account
      </label>
      <label htmlFor="qty" className="pr-2 text-center leading-4">
        Qty
      </label>
      <div className="relative mt-[5px]">
        <select
          id="account"
          disabled
          className="h-[21px] w-full appearance-none rounded-xs border border-gray-300 bg-[#f0f0f0] pl-[3px] text-[#888] opacity-100"
        >
          <option>Sim101</option>
        </select>
        <svg width="8" height="4" className="absolute top-2 right-1">
          <path d="M0 0h8L4 4z" fill="#999" />
        </svg>
      </div>
      <div className="mt-[5px] flex h-5 border border-gray-300 bg-white">
        <input id="qty" defaultValue="1" className="w-0 grow bg-transparent pb-1 pl-0.5 text-[12px]" />
        <div className="flex w-3.5 flex-col py-px">
          <button aria-label="Increase" className="flex flex-1 items-center justify-center border border-gray-300 bg-[#f0f0f0]">
            <svg width="5" height="3">
              <path d="M0 3h5L2.5 0z" fill="#4060a0" />
            </svg>
          </button>
          <button aria-label="Decrease" className="flex flex-1 items-center justify-center border border-gray-300 bg-[#f0f0f0]">
            <svg width="5" height="3">
              <path d="M0 0h5L2.5 3z" fill="#4060a0" />
            </svg>
          </button>
        </div>
      </div>
    </div>
    <div className="mt-3 mr-[3px] flex items-center justify-between pl-3.5">
      <label htmlFor="atm">ATM Strategy</label>
      <button aria-label="Edit strategy" className="h-[17px] w-[27px] rounded-xs border-2 border-gray-300 leading-none">
        ...
      </button>
    </div>
    <div className="relative mt-1 mr-0.5">
      <select
        id="atm"
        className="h-[21px] w-full appearance-none overflow-hidden rounded-xs border border-gray-500 bg-linear-to-b from-[#f8f8f8] to-[#ddd] pr-4 pl-[3px] text-black"
      >
        <option>* Active ATM Strategy 3 - C</option>
      </select>
      <svg width="8" height="4" className="absolute top-2 right-1">
        <path d="M0 0h8L4 4z" fill="#000" />
      </svg>
    </div>
    <div className="mt-1.5 grid grid-cols-[80fr_51fr] pl-[21px] leading-[22px]">
      <span>A: 95.87</span>
      <span>18</span>
      <span>B: 95.85</span>
      <span>16</span>
    </div>
  </div>
);

/* ---------- page ---------- */

const App = () => (
  <div
    className={`${SANS} grid h-screen grid-cols-[297fr_334fr_401fr_556fr] grid-rows-[minmax(0,1fr)] overflow-hidden bg-[#d7e4f2]`}
  >
    <section className="flex min-w-0 flex-col overflow-hidden border-r border-[#444b55] pr-[7px]">
      <TitleBar />
      <Toolbar views={4} />
      <div className="relative shrink-0">
        <TickChartLeft />
        <FixedButton className="top-[2px] right-[25px]" />
        <MenuButton />
      </div>
      <Scrollbar />
    </section>

    <section className="flex min-w-0 flex-col overflow-hidden border-r-[3px] border-[#3a3d42] px-[7px]">
      <TitleBar title="CL 03-13 (30 Min)  1/18/2013" />
      <Toolbar period="30 Min" page={false} overflow />
      <div className="relative shrink-0">
        <ProfileChart />
        <FixedButton className="top-[2px] right-[25px]" />
        <MenuButton />
      </div>
      <Scrollbar />
    </section>

    <section className="flex min-w-0 flex-col overflow-hidden px-[7px]">
      <TitleBar title="CL 03-13 (30 Min)  1/18/2013" />
      <Toolbar period="30 Min" views={1} overflow />
      <div className="relative shrink-0">
        <BalanceChart />
        <MenuButton />
      </div>
      <Scrollbar thumb="w-[26px]" grip />
    </section>

    <section className="flex min-w-0 flex-col overflow-hidden border-l border-[#444b55] pl-1.5">
      <TitleBar title="CL 03-13 (144 Tick)  1/18/2013" className="-mr-1.5" />
      <Toolbar period="144 Tick" views={4} />
      <div className="grid min-h-0 grow grid-cols-[386fr_163fr]">
        <div className="relative flex min-w-0 flex-col">
          <TickChart />
          <FixedButton className="top-[2px] right-px" />
          <Scrollbar />
        </div>
        <OrderPanel />
      </div>
    </section>
  </div>
);

export default App;
